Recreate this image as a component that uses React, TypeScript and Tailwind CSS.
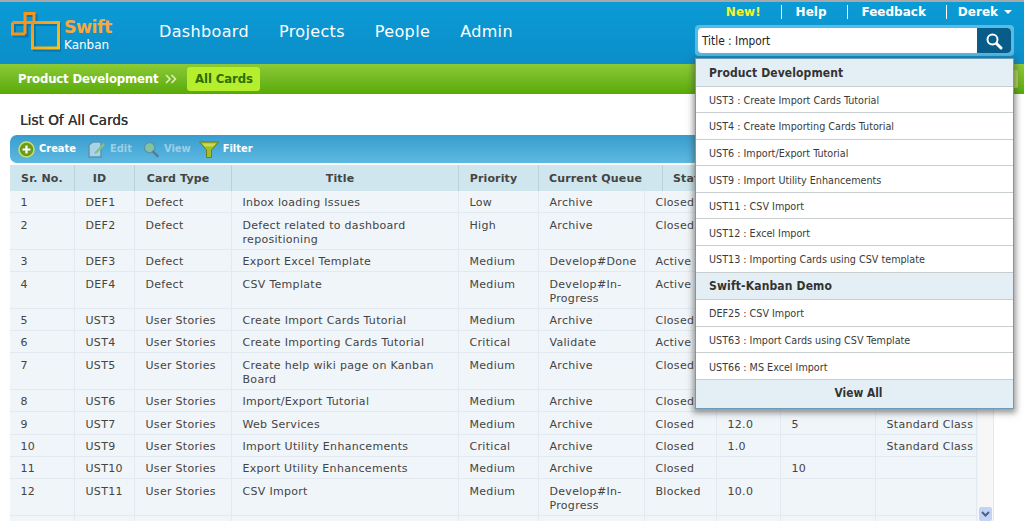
const rows: string[][] = [
  ["1","DEF1","Defect","Inbox loading Issues","Low","Archive","Closed","","",""],
  ["2","DEF2","Defect","Defect related to dashboard repositioning","High","Archive","Closed","","",""],
  ["3","DEF3","Defect","Export Excel Template","Medium","Develop#Done","Active","","",""],
  ["4","DEF4","Defect","CSV Template","Medium","Develop#In-Progress","Active","","",""],
  ["5","UST3","User Stories","Create Import Cards Tutorial","Medium","Archive","Closed","","",""],
  ["6","UST4","User Stories","Create Importing Cards Tutorial","Critical","Validate","Active","","",""],
  ["7","UST5","User Stories","Create help wiki page on Kanban Board","Medium","Archive","Closed","","",""],
  ["8","UST6","User Stories","Import/Export Tutorial","Medium","Archive","Closed","","",""],
  ["9","UST7","User Stories","Web Services","Medium","Archive","Closed","12.0","5","Standard Class"],
  ["10","UST9","User Stories","Import Utility Enhancements","Critical","Archive","Closed","1.0","","Standard Class"],
  ["11","UST10","User Stories","Export Utility Enhancements","Medium","Archive","Closed","","10",""],
  ["12","UST11","User Stories","CSV Import","Medium","Develop#In-Progress","Blocked","10.0","",""],
];
const headers = ["Sr. No.","ID","Card Type","Title","Priority","Current Queue","Status"];
const group1 = ["UST3 : Create Import Cards Tutorial","UST4 : Create Importing Cards Tutorial","UST6 : Import/Export Tutorial","UST9 : Import Utility Enhancements","UST11 : CSV Import","UST12 : Excel Import","UST13 : Importing Cards using CSV template"];
const group2 = ["DEF25 : CSV Import","UST63 : Import Cards using CSV Template","UST66 : MS Excel Import"];

function Logo() {
  return (
    <svg width="50" height="40" viewBox="0 0 50 40" className="shrink-0">
      <defs>
        <linearGradient id="lg" x1="0" y1="0" x2="1" y2="1">
          <stop offset="0" stopColor="#f7941d" />
          <stop offset="1" stopColor="#fcc314" />
        </linearGradient>
      </defs>
      <g fill="none" strokeWidth="3" stroke="#0a5f8e" opacity="0.55" transform="translate(2,2)">
        <path d="M21.5 10.500H47.500V36H21.500V10.500M1.500 10.500H14V22H1.500V10.500M14 1.500H23V10.500H14V22" />
      </g>
      <path d="M21.500 10.500H47.500V36H21.500V10.500" fill="none" stroke="url(#lg)" strokeWidth="3" />
      <path d="M1.500 10.500H21.500M1.500 10.500V22H14M14 22V1.500H23V10.500" fill="none" stroke="#f7941d" strokeWidth="3" />
    </svg>
  );
}

function Item({ icon, label, dim }: { icon: React.ReactNode; label: string; dim?: boolean }) {
  return (
    <div className="flex items-center gap-[4px]">
      {icon}
      <span className={dim ? "text-[11px] font-bold text-[#9ccfe6] [font-stretch:condensed]" : "text-[11px] font-bold text-white [font-stretch:condensed]"}>{label}</span>
    </div>
  );
}

export default function App() {
  return (
    <div className="relative h-[521px] w-[1024px] overflow-hidden bg-white font-['DejaVu_Sans',sans-serif] text-[11px] text-[#444]">
      <div className="h-[2px] bg-[#a8a8a8]" />
      <header className="flex h-[62px] justify-between bg-gradient-to-b from-[#0a9bd6] to-[#0c8ec9]">
        <div className="flex items-start pl-[11px] pt-[10px]">
          <Logo />
          <div className="ml-[3px] mt-[6px] flex w-[46px] flex-col leading-none">
            <span className="text-[17.500px] font-bold leading-[19px] tracking-[-0.6px] text-[#f9a83c]">Swift</span>
            <span className="mt-[1px] text-[12px] leading-[14px] text-white">Kanban</span>
          </div>
          <nav className="ml-[49px] mt-[10px] flex gap-[30px] text-[16px] leading-[20px] tracking-[0.35px] text-white">
            <span>Dashboard</span>
            <span>Projects</span>
            <span>People</span>
            <span>Admin</span>
          </nav>
        </div>
        <div className="mr-[10px] flex w-[319px] flex-col">
          <div className="flex h-[19px] items-center justify-end text-[12px] font-bold leading-[18px] text-white">
            <span className="text-[#f5f52a]">New!</span>
            <span className="ml-[20px] h-[14px] w-px bg-white" />
            <span className="ml-[14px]">Help</span>
            <span className="ml-[20px] h-[14px] w-px bg-white" />
            <span className="ml-[14px]">Feedback</span>
            <span className="ml-[20px] h-[14px] w-px bg-white" />
            <span className="ml-[11px]">Derek</span>
            <span className="ml-[6px] mr-[2px] h-0 w-0 border-x-[4px] border-t-[4px] border-x-transparent border-t-white" />
          </div>
          <div className="mt-[4px] h-[31px] rounded-[4px] bg-[#55bce6] p-[3px]">
            <div className="flex h-[25px] overflow-hidden rounded-[4px] bg-white">
              <span className="flex-1 pl-[4px] text-[11.800px] leading-[26px] text-[#222] [font-stretch:condensed]">Title : Import</span>
              <span className="flex w-[34px] items-center justify-center bg-[#075c89]">
                <svg width="18" height="18" viewBox="0 0 18 18" fill="none" stroke="#fff">
                  <circle cx="7.500" cy="7.500" r="5" strokeWidth="2" />
                  <path d="M11.500 11.500L16 16" strokeWidth="3" strokeLinecap="round" />
                </svg>
              </span>
            </div>
          </div>
        </div>
      </header>
      <div className="flex h-[30px] items-center bg-gradient-to-b from-[#8cca35] to-[#58aa04] pl-[18px]">
        <span className="whitespace-nowrap text-[13px] font-bold tracking-[-0.15px] text-white [font-stretch:condensed]">Product Development</span>
        <svg width="12" height="10" viewBox="0 0 12 10" fill="none" stroke="#dff2bd" strokeWidth="1.500" className="ml-[7px] shrink-0">
          <path d="M1 1l4 4-4 4M6.500 1l4 4-4 4" />
        </svg>
        <span className="ml-[10px] flex h-[24px] w-[73px] shrink-0 items-center justify-center rounded-[3px] bg-[#b4ee2c] text-[13px] font-bold tracking-[-0.1px] text-[#2f6d06] [font-stretch:condensed]">All Cards</span>
        <span className="ml-auto mr-[6px] h-[18px] w-[12px] rounded-[2px] bg-[#b4d653]" />
      </div>
      <main className="pl-[10px] pr-[30px]">
        <h1 className="ml-[10px] mt-[17px] h-[24px] text-[13.600px] leading-[18px] text-[#333] [text-shadow:0.3px_0_0_#333]">List Of All Cards</h1>
        <div className="flex h-[28px] items-center gap-[11px] rounded-[7px] bg-gradient-to-b from-[#379dcf] to-[#5db9e0] pl-[8px]">
          <Item label="Create" icon={
            <svg width="17" height="17" viewBox="0 0 17 17"><circle cx="8.500" cy="8.500" r="7.500" fill="#6e9a1a" stroke="#c6e36b" strokeWidth="1.500" /><path d="M8.500 4.500v8M4.500 8.500h8" stroke="#fff" strokeWidth="2.200" /></svg>
          } />
          <Item dim label="Edit" icon={
            <svg width="19" height="19" viewBox="0 0 19 19"><path d="M2 5l4-3h8v15H2z" fill="#a9d3e6" stroke="#5f93ad" strokeWidth="1.500" /><path d="M8 12l8-9 2 2-8 8-3 1z" fill="#7fc08d" /></svg>
          } />
          <Item dim label="View" icon={
            <svg width="17" height="19" viewBox="0 0 18 19"><circle cx="7" cy="7.500" r="5.500" fill="#7fc5a0" stroke="#5f93ad" strokeWidth="1.500" /><path d="M11 12l4.500 4.500" stroke="#4f7f99" strokeWidth="2.500" strokeLinecap="round" /></svg>
          } />
          <Item label="Filter" icon={
            <svg width="20" height="17" viewBox="0 0 20 17" className="-ml-[3px]"><path d="M0.500 1h19L12.500 9v7.500h-5V9z" fill="#a1bf2b" stroke="#6a7f1c" /><path d="M3 2.500h14l-3 3H6z" fill="#c7dc55" /></svg>
          } />
        </div>
        <div className="mt-[2px] flex">
          <div className="w-[968px] shrink-0">
            <div className="grid h-[26px] grid-cols-[65px_60px_97px_227px_80px_124px_1fr] bg-[#d0e6ee] text-[11px] font-bold leading-[27px] tracking-[0.15px] text-[#444]">
              {headers.map((h, i) => (
                <div key={h} className={i === 0 ? "overflow-hidden whitespace-nowrap border-r border-[#b5d2dd] text-center" : i === 6 ? "overflow-hidden whitespace-nowrap pl-[10px] text-left" : "overflow-hidden whitespace-nowrap border-r border-[#b5d2dd] pr-[10px] text-center"}>{h}</div>
              ))}
            </div>
            {rows.map((r) => (
              <div key={r[0]} className="grid grid-cols-[65px_60px_97px_227px_80px_106px_72px_64px_95px_101px] bg-[#f0f5f9] leading-[14px] tracking-[0.3px]">
                {r.map((c, i) => (
                  <div key={i} className="border-b border-r border-[#e2e9f1] pb-[2px] pl-[10.500px] pr-[2px] pt-[5.400px]">{c}</div>
                ))}
              </div>
            ))}
            <div className="grid h-[10px] grid-cols-[65px_60px_97px_227px_80px_106px_72px_64px_95px_101px] bg-[#f0f5f9]">
              {rows[0].map((_, i) => (
                <div key={i} className="border-r border-[#e2e9f1]" />
              ))}
            </div>
          </div>
          <div className="relative h-[356px] w-[16px] border-r border-[#e8e8e8] bg-[#f7f7f7]">
            <div className="absolute bottom-0 left-[1px] flex h-[14px] w-[13px] items-center justify-center rounded-[2px] bg-[#c3d3f6]">
              <svg width="9" height="6" viewBox="0 0 9 6" fill="none" stroke="#4d6185" strokeWidth="2"><path d="M1 1l3.500 3.500L8 1" /></svg>
            </div>
          </div>
        </div>
      </main>
      <div className="absolute left-[695px] top-[58px] w-[319px] border border-[#6d9cb9] bg-white text-[#333] shadow-[0_2px_6px_2px_rgba(70,70,70,0.55)]">
        <div className="flex h-[27.500px] items-center border-b border-[#c8cdd0] bg-[#e4eff5] pl-[13px] pt-[1px] text-[12px] font-bold tracking-[0.1px] text-[#333] [font-stretch:condensed]">Product Development</div>
        {group1.map((t) => (
          <div key={t} className="flex h-[26.600px] items-center border-b border-[#c8cdd0] pl-[13px] pt-[3px] text-[10.700px] text-[#3a3a3a] [font-stretch:condensed]">{t}</div>
        ))}
        <div className="flex h-[27.500px] items-center border-b border-[#c8cdd0] bg-[#e4eff5] pl-[13px] pt-[1px] text-[12px] font-bold tracking-[0.15px] text-[#333] [font-stretch:condensed]">Swift-Kanban Demo</div>
        {group2.map((t) => (
          <div key={t} className="flex h-[26.600px] items-center border-b border-[#c8cdd0] pl-[13px] pt-[3px] text-[10.700px] text-[#3a3a3a] [font-stretch:condensed]">{t}</div>
        ))}
        <div className="flex h-[28px] items-center justify-center bg-[#e4eff5] pl-[8px] text-[11.800px] font-bold text-[#333] [font-stretch:condensed]">View All</div>
      </div>
    </div>
  );
}
